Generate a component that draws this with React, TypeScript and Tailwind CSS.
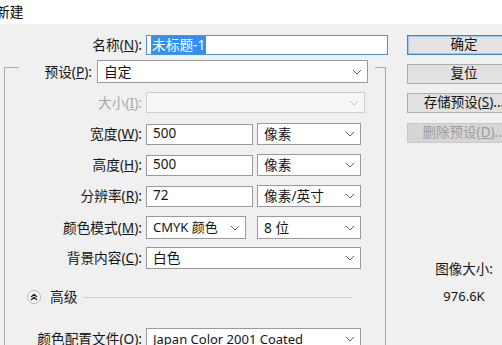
import React from "react";

const font = { fontFamily: '"Noto Sans", "Noto Sans CJK SC", sans-serif' };

function Chevron({ disabled = false }: { disabled?: boolean }) {
  return (
    <svg width="10" height="6" viewBox="0 0 10 6" className="shrink-0">
      <path d="M1 1 L5 5 L9 1" fill="none" stroke={disabled ? "#c4c4c4" : "#606060"} strokeWidth="1" />
    </svg>
  );
}

function Label({ children, disabled = false, w = "w-[137px]" }: { children: React.ReactNode; disabled?: boolean; w?: string }) {
  return (
    <div className={`${w} shrink-0 text-right text-[13.7px] leading-none whitespace-nowrap ${disabled ? "text-[#a8a8a8]" : "text-[#151515]"}`}>
      {children}
    </div>
  );
}

function Select({ value, w, disabled = false, h = "h-[22px]", cjk = false }: { value: string; w: string; disabled?: boolean; h?: string; cjk?: boolean }) {
  return (
    <div
      className={`${w} ${h} shrink-0 flex items-center justify-between pl-[6px] pr-[5px] border ${
        disabled ? "border-[#cfcfcf] bg-[#f7f7f7]" : "border-[#9a9a9a] bg-white"
      }`}
    >
      <span className={`${cjk ? "text-[13.7px]" : "text-[13px]"} text-[#151515] leading-none whitespace-nowrap`}>{value}</span>
      <Chevron disabled={disabled} />
    </div>
  );
}

function Input({ value, w }: { value: string; w: string }) {
  return (
    <div className={`${w} h-[21px] shrink-0 flex items-center pl-[6px] border border-[#9a9a9a] bg-white`}>
      <span className="text-[13.5px] text-[#151515] leading-none">{value}</span>
    </div>
  );
}

function Btn({ children, primary = false, disabled = false }: { children: React.ReactNode; primary?: boolean; disabled?: boolean }) {
  return (
    <div
      className={`w-[114px] h-[20px] shrink-0 flex items-center justify-center text-[13.5px] leading-none whitespace-nowrap border ${
        primary
          ? "border-[#3d88c8] bg-[#e3e3e3] text-[#151515] shadow-[inset_0_0_0_1px_#9cc6ea]"
          : disabled
          ? "border-[#c8c8c8] bg-[#d6d6d6] text-[#9c9c9c]"
          : "border-[#adadad] bg-[#e1e1e1] text-[#151515]"
      }`}
    >
      {children}
    </div>
  );
}

export default function App() {
  return (
    <div className="w-[502px] h-[345px] overflow-hidden bg-[#f0f0f0] flex flex-col" style={font}>
      <div className="h-[24px] shrink-0 bg-white flex items-center">
        <span className="-ml-[4px] text-[13.7px] text-black leading-none">新建</span>
      </div>
      <div className="flex pt-[11px]">
        <div className="w-[388px] shrink-0 flex flex-col">
          <div className="flex items-center h-[20px]">
            <Label w="w-[142px]">
              名称(<u>N</u>):
            </Label>
            <div className="ml-[4px] w-[242px] h-[20px] flex items-center pl-[4px] border border-[#4f93cf] bg-white">
              <span className="text-[13.7px] leading-none bg-[#3390f0] text-white px-[1px] py-[2px]">未标题-1</span>
            </div>
          </div>
          <div className="mt-[12px] ml-[4px] w-[382px] h-[300px] border-l border-r border-[#a9a9a9] flex flex-col">
            <div className="-mt-[7px] flex items-start h-[23px]">
              <div className="w-[14px] shrink-0 mt-[7px] border-t border-[#a9a9a9]" />
              <div className="h-[23px] flex items-center">
                <Label w="w-[73px]">
                  预设(<u>P</u>):
                </Label>
              </div>
              <div className="ml-[5px]">
                <Select value="自定" w="w-[271px]" h="h-[23px]" cjk />
              </div>
              <div className="ml-auto w-[10px] mt-[7px] border-t border-[#a9a9a9]" />
            </div>
            <div className="mt-[9px] flex items-center">
              <Label disabled>
                大小(<u>I</u>):
              </Label>
              <div className="ml-[4px]">
                <Select value="" w="w-[219px]" h="h-[21px]" disabled />
              </div>
            </div>
            <div className="mt-[10px] flex items-center">
              <Label>
                宽度(<u>W</u>):
              </Label>
              <div className="ml-[4px]">
                <Input value="500" w="w-[107px]" />
              </div>
              <div className="ml-[4px]">
                <Select value="像素" w="w-[104px]" cjk />
              </div>
            </div>
            <div className="mt-[9px] flex items-center">
              <Label>
                高度(<u>H</u>):
              </Label>
              <div className="ml-[4px]">
                <Input value="500" w="w-[107px]" />
              </div>
              <div className="ml-[4px]">
                <Select value="像素" w="w-[104px]" cjk />
              </div>
            </div>
            <div className="mt-[9px] flex items-center">
              <Label>
                分辨率(<u>R</u>):
              </Label>
              <div className="ml-[4px]">
                <Input value="72" w="w-[107px]" />
              </div>
              <div className="ml-[4px]">
                <Select value="像素/英寸" w="w-[104px]" cjk />
              </div>
            </div>
            <div className="mt-[9px] flex items-center">
              <Label>
                颜色模式(<u>M</u>):
              </Label>
              <div className="ml-[4px]">
                <Select value="CMYK 颜色" w="w-[100px]" h="h-[23px]" />
              </div>
              <div className="ml-[11px]">
                <Select value="8 位" w="w-[104px]" h="h-[23px]" cjk />
              </div>
            </div>
            <div className="mt-[8px] flex items-center">
              <Label>
                背景内容(<u>C</u>):
              </Label>
              <div className="ml-[4px]">
                <Select value="白色" w="w-[215px]" cjk />
              </div>
            </div>
            <div className="mt-[20px] flex items-center h-[16px]">
              <div className="ml-[22px] w-[14px] h-[14px] rounded-full border border-[#b8b8b8] bg-[#f8f8f8] flex items-center justify-center">
                <svg width="8" height="8" viewBox="0 0 8 8">
                  <path d="M1 4 L4 1.3 L7 4 M1 7 L4 4.3 L7 7" fill="none" stroke="#222" strokeWidth="1.3" />
                </svg>
              </div>
              <span className="ml-[9px] text-[13.7px] text-[#151515] leading-none">高级</span>
              <div className="ml-[7px] w-[268px] border-t border-[#cdcdcd]" />
            </div>
            <div className="mt-[23px] flex items-center">
              <Label>
                颜色配置文件(<u>O</u>):
              </Label>
              <div className="ml-[4px]">
                <Select value="Japan Color 2001 Coated" w="w-[215px]" />
              </div>
            </div>
          </div>
        </div>
        <div className="ml-[19px] flex flex-col">
          <Btn primary>确定</Btn>
          <div className="mt-[9px]">
            <Btn>复位</Btn>
          </div>
          <div className="mt-[9px]">
            <Btn>
              存储预设(<u>S</u>)...
            </Btn>
          </div>
          <div className="mt-[10px]">
            <Btn disabled>
              删除预设(<u>D</u>)...
            </Btn>
          </div>
          <div className="w-[114px] mt-[120px] text-center text-[13.5px] text-[#151515] leading-none">图像大小:</div>
          <div className="w-[114px] mt-[13px] text-center text-[13px] text-[#151515] leading-none">976.6K</div>
        </div>
      </div>
    </div>
  );
}
